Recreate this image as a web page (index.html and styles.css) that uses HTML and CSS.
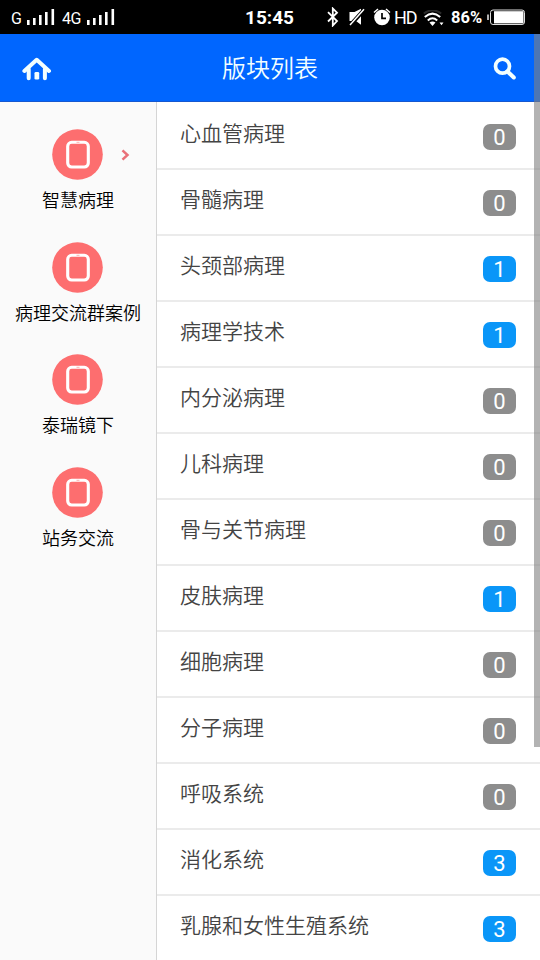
FILE: index.html
```html
<!DOCTYPE html>
<html lang="zh-CN">
<head>
<meta charset="utf-8">
<title>版块列表</title>
<link rel="stylesheet" href="styles.css">
</head>
<body>
<svg width="0" height="0" class="defs">
  <symbol id="signal" viewBox="0 0 28 17"><path d="M0 11h2.600v5H0zM6 9h2.600v7H6zM12 6h2.600v10H12zM18 3h2.600v13H18zM24.500 0h2.600v16h-2.600z" fill="#fff"/></symbol>
  <symbol id="tablet" viewBox="0 0 51 51"><circle cx="25.500" cy="25.500" r="25.300" fill="#fd6e6f"/><rect x="15.700" y="13.300" width="20.600" height="24.700" rx="4" fill="none" stroke="#fff" stroke-width="3.100"/><path d="M24.500 13.300h3" stroke="#fdb0b0" stroke-width="1"/></symbol>
</svg>
<div class="status">
  <span class="net g">G</span>
  <svg class="sig"><use href="#signal"/></svg>
  <span class="net g4">4G</span>
  <svg class="sig"><use href="#signal"/></svg>
  <span class="time">15:45</span>
  <svg class="bt" width="12" height="20" viewBox="0 0 12 20"><path d="M1 5.200l9 8.800-4.200 4.500V1.500L10 5.700 1 14.500" fill="none" stroke="#fff" stroke-width="1.800"/></svg>
  <svg class="mute" width="18" height="18" viewBox="0 0 18 18"><path d="M1.500 4h5L13 .8v16L8 13H1.500z" fill="#fff"/><path d="M1.500 18L17 .8" stroke="#000" stroke-width="4"/><path d="M2 17L16 1.300" stroke="#fff" stroke-width="1.500"/></svg>
  <svg class="alarm" width="18" height="18" viewBox="0 0 18 18"><circle cx="9" cy="9.500" r="7.800" fill="#fff"/><path d="M1 4.500L5 1M17 4.500L13 1" stroke="#fff" stroke-width="1.500"/><path d="M9 5v5.300h4" fill="none" stroke="#000" stroke-width="1.700"/></svg>
  <span class="hd">HD</span>
  <svg class="wifi" width="21" height="17" viewBox="0 0 21 17"><g fill="none" stroke-width="2"><path d="M.8 3.500Q9.500-2.800 18.200 3.500" stroke="#2a2a2a"/><path d="M1.800 7Q9.500 .2 17.200 7M4.800 10.400Q9.500 6.200 14.200 10.400" stroke="#fff"/></g><path d="M6.500 12.500q3-2 6 0l-3 3.500zM16.500 12.500h4l-2 2.700z" fill="#fff"/></svg>
  <span class="percent">86%</span>
  <svg class="battery" width="39" height="17" viewBox="0 0 39 17"><rect x="3.500" y="1" width="34" height="14.500" rx="2.500" fill="none" stroke="#ddd"/><rect x="7" y="2.200" width="29.500" height="12.200" fill="#fff"/><path d="M1 5.500v5.500" stroke="#ddd" stroke-width="1.600"/></svg>
</div>
<header class="header">
  <svg class="home" width="30" height="24" viewBox="0 0 30 24"><path d="M2.400 14L14.700 2.800 27 14" fill="none" stroke="#f3ffff" stroke-width="4" stroke-linejoin="round" stroke-linecap="round"/><path d="M6.700 12v9.200M22.900 12v9.200" stroke="#f3ffff" stroke-width="4" stroke-linecap="round"/><rect x="12.500" y="15" width="4.700" height="7.500" rx="1.300" fill="#f3ffff"/></svg>
  <h1 class="title">版块列表</h1>
  <svg class="search" width="24" height="24" viewBox="0 0 24 24"><circle cx="9.500" cy="9.200" r="7" fill="none" stroke="#f3ffff" stroke-width="3.700"/><path d="M14.500 14.500l6.300 6" stroke="#f3ffff" stroke-width="4" stroke-linecap="round"/></svg>
</header>
<main class="main">
  <nav class="side">
    <a class="cat"><svg class="disc"><use href="#tablet"/></svg><span>智慧病理</span><svg class="arrow" width="9" height="12" viewBox="0 0 9 12"><path d="M1.500 1.300L6.500 6l-5 4.700" fill="none" stroke="#e97078" stroke-width="2.500"/></svg></a>
    <a class="cat"><svg class="disc"><use href="#tablet"/></svg><span>病理交流群案例</span></a>
    <a class="cat"><svg class="disc"><use href="#tablet"/></svg><span>泰瑞镜下</span></a>
    <a class="cat"><svg class="disc"><use href="#tablet"/></svg><span>站务交流</span></a>
  </nav>
  <ul class="list">
    <li class="row"><span>心血管病理</span><b class="badge">0</b></li>
    <li class="row"><span>骨髓病理</span><b class="badge">0</b></li>
    <li class="row"><span>头颈部病理</span><b class="badge on">1</b></li>
    <li class="row"><span>病理学技术</span><b class="badge on">1</b></li>
    <li class="row"><span>内分泌病理</span><b class="badge">0</b></li>
    <li class="row"><span>儿科病理</span><b class="badge">0</b></li>
    <li class="row"><span>骨与关节病理</span><b class="badge">0</b></li>
    <li class="row"><span>皮肤病理</span><b class="badge on">1</b></li>
    <li class="row"><span>细胞病理</span><b class="badge">0</b></li>
    <li class="row"><span>分子病理</span><b class="badge">0</b></li>
    <li class="row"><span>呼吸系统</span><b class="badge">0</b></li>
    <li class="row"><span>消化系统</span><b class="badge on">3</b></li>
    <li class="row"><span>乳腺和女性生殖系统</span><b class="badge on">3</b></li>
  </ul>
</main>
<div class="scrollbar"></div>
</body>
</html>
```
FILE: styles.css
```css
* { box-sizing: border-box; }
body {
  margin: 0;
  width: 540px;
  height: 960px;
  overflow: hidden;
  position: relative;
  display: flex;
  flex-direction: column;
  background: #fff;
  font-family: Roboto, "Noto Sans CJK SC", sans-serif;
}
.defs { position: absolute; }
.status {
  flex: none;
  height: 34px;
  background: #000;
  color: #fff;
  display: flex;
  align-items: center;
  white-space: nowrap;
}
.status > * { flex: none; }
.net { font-size: 16px; line-height: 18px; margin-top: 4px; }
.g { margin-left: 11px; width: 16px; }
.g4 { margin-left: 7px; width: 25px; letter-spacing: -0.5px; }
.sig { width: 28px; height: 17px; }
.time { width: 50px; margin-left: 130px; font-size: 19px; font-weight: 700; margin-top: 1px; }
.bt { margin-left: 32px; }
.mute { margin-left: 9px; }
.alarm { margin-left: 7px; }
.hd { width: 23px; margin-left: 3px; font-size: 18px; letter-spacing: -1px; font-weight: 400; }
.wifi { margin-left: 6px; margin-top: 3px; }
.percent { width: 32px; margin-left: 7px; font-size: 16.5px; font-weight: 700; margin-top: 1px; }
.battery { margin-left: 4px; }
.header {
  flex: none;
  height: 68px;
  background: #0066ff;
  border-bottom: 1px solid #1558d0;
  display: flex;
  align-items: center;
  justify-content: space-between;
  padding: 2px 23px 0 22px;
}
.title {
  margin: 0 5px 0 0;
  font-size: 24px;
  line-height: 34px;
  font-weight: 350;
  color: #f3ffff;
}
.main { flex: 1; display: flex; min-height: 0; }
.side {
  width: 157px;
  border-right: 1px solid #d5d5d5;
  background: #fafafa;
  padding-top: 27px;
}
.cat {
  position: relative;
  display: flex;
  flex-direction: column;
  align-items: center;
  height: 112.5px;
  font-size: 18px;
  line-height: 26px;
  font-weight: 350;
  color: #000;
  white-space: nowrap;
}
.disc { width: 51px; height: 51px; margin-bottom: 8px; margin-right: 1px; }
.arrow { position: absolute; left: 121px; top: 20px; }
.list {
  flex: 1;
  list-style: none;
  margin: 0;
  padding: 2px 0 0;
}
.row {
  height: 66px;
  border-bottom: 2px solid #ebebeb;
  display: flex;
  align-items: flex-start;
  justify-content: space-between;
  padding: 15px 24px 0 23px;
  font-size: 21px;
  line-height: 30px;
  font-weight: 350;
  color: #444;
}
.badge {
  width: 33px;
  height: 26px;
  margin-top: 5px;
  border-radius: 7px;
  background: #8d8d8d;
  color: #fff;
  font-size: 22px;
  line-height: 27px;
  font-weight: 400;
  text-align: center;
}
.on { background: #0a96f8; }
.scrollbar {
  position: absolute;
  top: 34px;
  right: 0;
  width: 6px;
  height: 713px;
  background: rgba(128, 128, 128, 0.6);
}
```
